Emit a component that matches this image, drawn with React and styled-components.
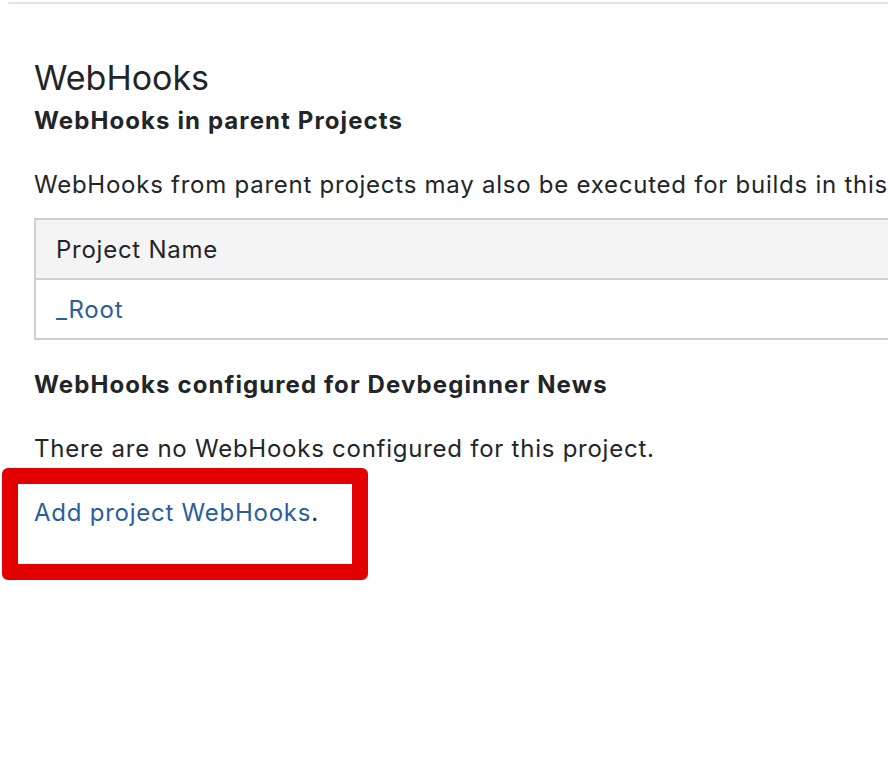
import React from "react";
import styled, { createGlobalStyle } from "styled-components";

const Global = createGlobalStyle`
  html, body { margin: 0; padding: 0; background: #fff; }
  body { font-family: Inter, "Noto Sans", "Liberation Sans", sans-serif; color: #222528; overflow: hidden; }
`;

const Page = styled.div`
  width: 888px;
  height: 766px;
  overflow: hidden;
`;

const TopRule = styled.div`
  margin: 2px 0 0 8px;
  height: 2px;
  background: #dfe3e8;
`;

const Content = styled.main`
  padding: 54px 0 0 34px;
  width: 1100px;
`;

const Title = styled.h1`
  margin: 0;
  font-size: 34px;
  font-weight: 400;
  line-height: 40px;
`;

const SubTitle = styled.h2`
  margin: ${(p) => p.$top || 0}px 0 0;
  font-size: 24px;
  font-weight: 700;
  line-height: 30px;
  letter-spacing: 1.1px;
`;

const Text = styled.p`
  margin: ${(p) => p.$top || 0}px 0 0;
  font-size: 24px;
  line-height: 30px;
  letter-spacing: 0.75px;
`;

const Table = styled.table`
  margin-top: 18px;
  border-collapse: collapse;
  width: 1000px;
  font-size: 24px;
  letter-spacing: 0.75px;
`;

const Th = styled.th`
  text-align: left;
  font-weight: 400;
  background: #f4f4f4;
  border: 2px solid #cfcfcf;
  height: 58px;
  padding: 0 20px;
`;

const Td = styled.td`
  border: 2px solid #cfcfcf;
  height: 58px;
  padding: 0 20px;
`;

const Link = styled.a`
  color: #2b5d9c;
  text-decoration: none;
`;

const Highlight = styled.div`
  box-sizing: border-box;
  margin: 4px 0 0 -32px;
  width: 366px;
  height: 112px;
  border: 16px solid #e20000;
  border-radius: 6px;
  padding: 0 0 0 16px;
`;

export default function App() {
  return (
    <Page>
      <Global />
      <TopRule />
      <Content>
        <Title>WebHooks</Title>
        <SubTitle $top={8}>WebHooks in parent Projects</SubTitle>
        <Text $top={34}>WebHooks from parent projects may also be executed for builds in this project.</Text>
        <Table>
          <thead>
            <tr>
              <Th>Project Name</Th>
            </tr>
          </thead>
          <tbody>
            <tr>
              <Td>
                <Link href="#">_Root</Link>
              </Td>
            </tr>
          </tbody>
        </Table>
        <SubTitle $top={30}>WebHooks configured for Devbeginner News</SubTitle>
        <Text $top={34}>There are no WebHooks configured for this project.</Text>
        <Highlight>
          <Text $top={14}>
            <Link href="#">Add project WebHooks</Link>.
          </Text>
        </Highlight>
      </Content>
    </Page>
  );
}
